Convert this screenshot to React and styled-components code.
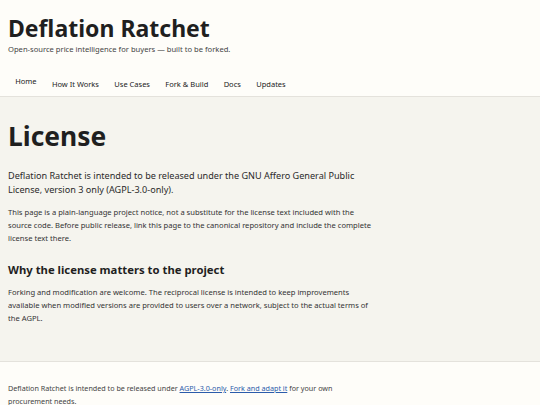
import React from 'react'
import styled, { createGlobalStyle } from 'styled-components'

const GlobalStyle = createGlobalStyle`
    html, body {
        margin: 0;
        padding: 0;
        background: #f5f4ee;
        font-family: "Noto Sans", "DejaVu Sans", sans-serif;
        color: #222;
    }
`

const links = ['Home', 'How It Works', 'Use Cases', 'Fork & Build', 'Docs', 'Updates']

const App = () => {
    return (
        <Page>
            <GlobalStyle />
            <Header>
                <SiteTitle>Deflation Ratchet</SiteTitle>
                <Tagline>Open-source price intelligence for buyers — built to be forked.</Tagline>
                <Nav>
                    {links.map((l, i) => (
                        <NavLink key={l} $active={i === 0}>{l}</NavLink>
                    ))}
                </Nav>
            </Header>

            <Main>
                <Title>License</Title>
                <Lead>
                    Deflation Ratchet is intended to be released under the GNU Affero General Public
                    License, version 3 only (AGPL-3.0-only).
                </Lead>
                <Text>
                    This page is a plain-language project notice, not a substitute for the license text included with the
                    source code. Before public release, link this page to the canonical repository and include the complete
                    license text there.
                </Text>
                <SubTitle>Why the license matters to the project</SubTitle>
                <Text>
                    Forking and modification are welcome. The reciprocal license is intended to keep improvements
                    available when modified versions are provided to users over a network, subject to the actual terms of
                    the AGPL.
                </Text>
            </Main>

            <Footer>
                <FootText>
                    Deflation Ratchet is intended to be released under <A href="#">AGPL-3.0-only</A>.{' '}
                    <A href="#">Fork and adapt it</A> for your own procurement needs.
                </FootText>
            </Footer>
        </Page>
    )
}

export default App

const Page = styled.div`
    min-height: 100vh;
    display: flex;
    flex-direction: column;
`

const Header = styled.header`
    background: #fefdf9;
    border-bottom: 1px solid #e4e2dc;
    padding: 14px 8px 0;
`

const SiteTitle = styled.h1`
    margin: 0;
    font-size: 23px;
    font-weight: 700;
    line-height: 28px;
    color: #1f1f1f;
`

const Tagline = styled.p`
    margin: 1px 0 0;
    font-size: 7.6px;
    line-height: 12px;
    color: #444;
`

const Nav = styled.nav`
    display: flex;
    margin: 14px 0 0 -0.5px;
`

const NavLink = styled.a`
    padding: ${p => p.$active ? '5.5px 7.7px 9.5px' : '9px 7.7px 6px'};
    font-size: 7.5px;
    line-height: 12px;
    color: #222;
    text-decoration: none;
    cursor: pointer;
`

const Main = styled.main`
    flex: 1;
    padding: 23px 8px 35.5px;
    max-width: 366px;
`

const Title = styled.h2`
    margin: 0;
    font-size: 26.4px;
    font-weight: 700;
    line-height: 32px;
    color: #1f1f1f;
`

const Lead = styled.p`
    margin: 17px 0 0;
    font-size: 9.1px;
    line-height: 14px;
    color: #2a2a2a;
`

const Text = styled.p`
    margin: 8.5px 0 0;
    font-size: 7.6px;
    line-height: 13px;
    color: #333;
`

const SubTitle = styled.h3`
    margin: 17px 0 0;
    font-size: 11.3px;
    font-weight: 700;
    line-height: 16px;
    color: #1f1f1f;
`

const Footer = styled.footer`
    background: #fefdf9;
    border-top: 1px solid #e4e2dc;
    padding: 20.5px 8px 10px;
`

const FootText = styled.p`
    margin: 0;
    max-width: 366px;
    font-size: 7.2px;
    line-height: 13px;
    color: #444;
`

const A = styled.a`
    color: #2b5cab;
    text-decoration: underline;
`
